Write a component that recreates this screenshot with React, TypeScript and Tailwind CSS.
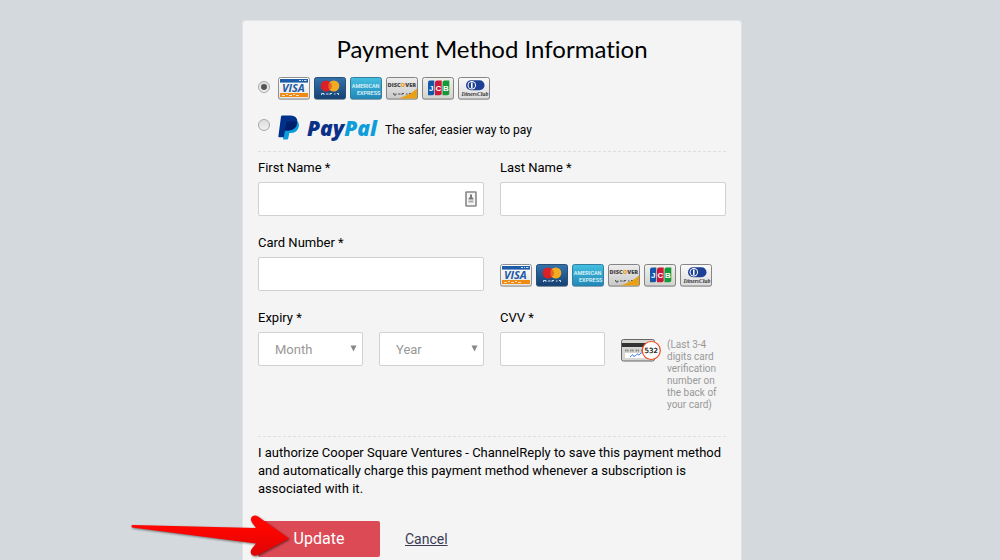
import type { ReactNode } from "react";

const fieldClass =
  "block w-full h-[34px] px-4 bg-white border border-[#d3d1cd] rounded-[2px] text-[13px] text-black outline-none focus:border-gray-400";

function CardFrame({ id, from, to, stroke, label, children }: {
  id: string;
  from: string;
  to: string;
  stroke: string;
  label: string;
  children: ReactNode;
}) {
  return (
    <svg width="32" height="23" viewBox="0 0 32 23" role="img" aria-label={label}>
      <defs>
        <linearGradient id={id} x1="0" y1="0" x2="0" y2="1">
          <stop offset="0" stopColor={from} />
          <stop offset="1" stopColor={to} />
        </linearGradient>
      </defs>
      <rect x="0" y="1" width="32" height="22" rx="2.5" fill="#000" opacity="0.15" />
      <rect x="0.5" y="0.5" width="31" height="21.5" rx="2" fill={`url(#${id})`} stroke={stroke} />
      {children}
    </svg>
  );
}

function CardLogos({ prefix }: { prefix: string }) {
  return (
    <div className="flex items-center gap-1">
      <CardFrame id={`${prefix}-visa`} from="#ffffff" to="#e4e4e4" stroke="#909090" label="Visa">
        <rect x="2" y="2" width="28" height="3.6" fill="#1d5da8" />
        <path d="M21 3.5h2M24 3.5h1M26 3.5h2.5" stroke="#c9dcf0" />
        <text x="4" y="15" fontFamily="Open Sans, sans-serif" fontSize="11" fontWeight="700" fontStyle="italic" fill="#1f5aa3">
          VISA
        </text>
        <rect x="2" y="16" width="28" height="4" fill="#f08a12" />
        <path d="M4 18.5h3M8 17.5h2M11 18.5h3M15 17.5h2M18 18.5h3" stroke="#fde3c0" />
      </CardFrame>
      <CardFrame id={`${prefix}-mc`} from="#3473ad" to="#153f70" stroke="#2b5078" label="MasterCard">
        <circle cx="12.2" cy="9" r="5.5" fill="#db2028" />
        <circle cx="19.8" cy="9" r="5.5" fill="#f2ac20" />
        <path d="M14.5 7h3M14 9h4M14.5 11h3" stroke="#db2028" />
        <path d="M7.5 18v-1.5h2.5V18M12 17h2.5M16 18v-1.5h2M20 17h1.5M23 16.5h1.5V18" fill="none" stroke="#cfdeee" />
      </CardFrame>
      <CardFrame id={`${prefix}-amex`} from="#43c0e0" to="#2187b8" stroke="#347d9c" label="American Express">
        <g fontFamily="Roboto, sans-serif" fontSize="5.5" fontWeight="500" fill="#e6f7fc">
          <text x="1.8" y="10.5">AMERICAN</text>
          <text x="7" y="17.8">EXPRESS</text>
        </g>
      </CardFrame>
      <CardFrame id={`${prefix}-disc`} from="#ededed" to="#c9c9c9" stroke="#858585" label="Discover">
        <path d="M12 21.5 Q24 18 31 11.5 V20.5 Q31 21.5 30 21.5 Z" fill="#e8a014" />
        <text x="1.5" y="10.2" fontFamily="Open Sans, sans-serif" fontSize="5.7" fontWeight="800" fill="#444">
          DISC<tspan fill="#f09a18">O</tspan>VER
        </text>
        <path d="M7 16.5h1V18h2v-1.5M12 17h2.5M16 18v-1.5h2M20 17h1.5M23 16.5h1.5" fill="none" stroke="#555" />
      </CardFrame>
      <CardFrame id={`${prefix}-jcb`} from="#f0f0ed" to="#d3d3ce" stroke="#858585" label="JCB">
        <path d="M8 3.5h4.3v12.8a2 2 0 0 1-2 2H6V5.5a2 2 0 0 1 2-2z" fill="#1457a8" />
        <path d="M15 3.5h4.7v12.8a2 2 0 0 1-2 2H13V5.5a2 2 0 0 1 2-2z" fill="#cc1836" />
        <path d="M22.5 3.5h4.8v12.8a2 2 0 0 1-2 2h-4.8V5.5a2 2 0 0 1 2-2z" fill="#159a3b" />
        <g fontFamily="Liberation Sans, sans-serif" fontSize="8" fontWeight="700" fill="#fff">
          <text x="7" y="14">J</text>
          <text x="13.5" y="14">C</text>
          <text x="21" y="14">B</text>
        </g>
      </CardFrame>
      <CardFrame id={`${prefix}-diners`} from="#fafafa" to="#dcdcde" stroke="#858585" label="Diners Club">
        <rect x="8" y="3.2" width="18.5" height="10" rx="5" fill="#1d3f94" />
        <circle cx="13.8" cy="8.2" r="4.2" fill="#fff" />
        <circle cx="13.8" cy="8.2" r="3.2" fill="#1d3f94" />
        <rect x="13" y="5.5" width="1.6" height="5.4" fill="#fff" />
        <text x="3.5" y="19.3" fontFamily="Liberation Serif, serif" fontSize="5.6" fontWeight="700" fontStyle="italic" fill="#333">
          DinersClub
        </text>
      </CardFrame>
    </div>
  );
}

function PayPalLogo() {
  return (
    <svg width="101" height="26" viewBox="0 0 101 26" overflow="visible" role="img" aria-label="PayPal">
      <path d="M7 8 L19.5 6.5 Q22 9 20.4 13 Q18.6 18 12.6 18 H11.4 L10.2 23.6 Q10 24.6 9 24.6 H5 Z" fill="#0d9ddb" />
      <path d="M3 1.5 Q3.2 0.4 4.3 0.4 H12.5 Q19.6 0.6 19.4 6.8 Q18.6 15.4 10.4 15.4 H8 Q7 15.4 6.8 16.4 L5.8 22.2 H1 Q0.2 22.2 0.4 21.2 Z" fill="#00318a" />
      <path d="M8.4 7.6 Q8.6 6.6 9.6 6.6 H15.4 Q18 6.6 19.3 7.2 Q18.2 15.4 10.4 15.4 H8 Q7.3 15.4 7 15.9 Z" fill="#001f6b" />
      <text x="29" y="21" fontFamily="Open Sans, sans-serif" fontSize="21" fontWeight="800" fontStyle="italic" fill="#0a3088">
        Pay<tspan fill="#0d9ddb">Pal</tspan>
      </text>
    </svg>
  );
}

function CvvIcon() {
  return (
    <svg width="40" height="23" viewBox="0 0 40 23" className="shrink-0" aria-hidden="true">
      <rect x="0.5" y="0.5" width="33" height="21.5" rx="2" fill="#d6d6d2" stroke="#666" />
      <rect x="1" y="4" width="32" height="4" fill="#333" />
      <path d="M4 11.5h3.5M9 11.5h4M14.5 11.5h4M20 11.5h3" stroke="#888" strokeWidth="2" strokeDasharray="1.5 .6" />
      <rect x="4" y="14" width="20" height="5" fill="#fff" />
      <path d="M9 18c2-1 2-3 3-2s0 2 2 1 2-3 3-2 0 2 2 0 2-1 4-1" fill="none" stroke="#3f7cf0" />
      <circle cx="30.3" cy="11.5" r="9" fill="#fff" stroke="#f04a1c" strokeWidth="1.2" />
      <text x="23.5" y="14" fontFamily="DejaVu Sans, sans-serif" fontSize="7" fill="#000" stroke="#000" strokeWidth="0.2">
        532
      </text>
    </svg>
  );
}

function PaymentRadio({ id, checked }: { id: string; checked?: boolean }) {
  return (
    <span className="grid shrink-0">
      <input
        type="radio"
        name="method"
        id={id}
        defaultChecked={checked}
        className="peer appearance-none col-start-1 row-start-1 w-3 h-3 rounded-full border border-[#a8a8a8] bg-linear-to-b from-[#dedede] to-[#efefef]"
      />
      <span className="hidden peer-checked:block col-start-1 row-start-1 place-self-center size-1.5 rounded-full bg-[#555] pointer-events-none" />
    </span>
  );
}

function Field({ id, label, children }: { id: string; label: string; children: ReactNode }) {
  return (
    <div>
      <label htmlFor={id} className="block mb-1 leading-5">{label}</label>
      {children}
    </div>
  );
}

function Dropdown({ id, placeholder, options, label }: {
  id: string;
  placeholder: string;
  options: string[];
  label?: string;
}) {
  return (
    <div className="relative">
      <select id={id} aria-label={label} className={`${fieldClass} appearance-none pt-0.5 !text-[#999]`}>
        <option>{placeholder}</option>
        {options.map((option) => (
          <option key={option}>{option}</option>
        ))}
      </select>
      <svg
        width="7"
        height="7"
        viewBox="0 0 7 7"
        className="absolute right-1.5 top-[13px] pointer-events-none"
        aria-hidden="true"
      >
        <path d="M0.5 0.5h6L3.5 6.5z" fill="#888" />
      </svg>
    </div>
  );
}

function PointerArrow() {
  return (
    <svg
      width="162"
      height="45"
      viewBox="0 0 162 45"
      className="absolute -left-[127px] -top-1.5 pointer-events-none drop-shadow-[1px_1px_1px_rgba(0,0,0,0.5)]"
      aria-hidden="true"
    >
      <defs>
        <linearGradient id="arrow-fill" x1="0" y1="0" x2="0" y2="1">
          <stop offset="0.3" stopColor="#ff0500" />
          <stop offset="1" stopColor="#dc0505" />
        </linearGradient>
      </defs>
      <path
        d="M1 10 L125 13 L121 7.5 Q118.5 3.5 121.5 1.3 Q124 -0.3 127 1.5 L158 23.5 L128 39.5 Q123 42 120.5 39.5 Q118.5 36.5 121 33.5 L125 28.5 L1 12.5 Q0 11 1 10 Z"
        fill="url(#arrow-fill)"
      />
    </svg>
  );
}

const months = ["01", "02", "03", "04", "05", "06", "07", "08", "09", "10", "11", "12"];
const years = ["2018", "2019", "2020", "2021", "2022", "2023"];

export default function App() {
  return (
    <main className="min-h-screen flex flex-col pt-5 pr-4 bg-[#d4d9dd] font-['Roboto',sans-serif] text-[13px] text-black">
      <form
        onSubmit={(e) => e.preventDefault()}
        className="flex-1 w-full max-w-[500px] mx-auto px-[15px] pt-3 pb-[3px] bg-[#f4f4f4] border border-b-0 border-[#e2e4e6] rounded-t-[4px]"
      >
        <h1 className="text-center text-2xl font-['Lato',sans-serif] [font-variant-ligatures:none]">
          Payment Method Information
        </h1>

        <div className="flex items-start gap-2 mt-3">
          <div className="flex pt-1">
            <PaymentRadio id="method-card" checked />
          </div>
          <label htmlFor="method-card"><CardLogos prefix="method" /></label>
        </div>
        <div className="flex items-start gap-2 mt-[15px] pb-2.5 border-b border-dashed border-[#dedede]">
          <div className="flex pt-1">
            <PaymentRadio id="method-paypal" />
          </div>
          <label htmlFor="method-paypal" className="flex items-end gap-1.5">
            <PayPalLogo />
            <span className="text-xs leading-[22px]">The safer, easier way to pay</span>
          </label>
        </div>

        <div className="grid grid-cols-2 gap-x-4 gap-y-[17px] mt-1.5">
          <Field id="first-name" label="First Name *">
            <div className="relative">
              <input id="first-name" type="text" className={fieldClass} />
              <svg
                width="12"
                height="16"
                viewBox="0 0 12 16"
                className="absolute right-[7px] top-[9px] pointer-events-none"
                aria-hidden="true"
              >
                <rect x="1" y="1" width="10" height="14" rx="0.5" fill="#f5f5f5" stroke="#888" strokeWidth="1.6" />
                <path d="M5 3.5h2v2.5l1.5 1.5v1h-5v-1L5 6z" fill="#777" />
                <path d="M3.5 10.5h5" stroke="#aaa" strokeWidth="2" />
              </svg>
            </div>
          </Field>
          <Field id="last-name" label="Last Name *">
            <input id="last-name" type="text" className={fieldClass} />
          </Field>

          <Field id="card-number" label="Card Number *">
            <input id="card-number" type="text" className={fieldClass} />
          </Field>
          <div className="flex items-end pb-1">
            <CardLogos prefix="number" />
          </div>

          <Field id="month" label="Expiry *">
            <div className="grid grid-cols-2 gap-4">
              <Dropdown id="month" placeholder="Month" options={months} />
              <Dropdown id="year" label="Expiry year" placeholder="Year" options={years} />
            </div>
          </Field>
          <Field id="cvv" label="CVV *">
            <div className="grid grid-cols-2 gap-4">
              <input id="cvv" type="text" className={fieldClass} />
              <div className="flex items-start gap-1.5 pt-[7px] text-[10px] leading-3 text-[#999]">
                <CvvIcon />
                <p>(Last 3-4 digits card verification number on the back of your card)</p>
              </div>
            </div>
          </Field>
        </div>

        <p className="mt-[25px] pt-[7px] border-t border-dashed border-[#dedede] leading-[18px]">
          I authorize Cooper Square Ventures - ChannelReply to save this payment method and automatically charge
          this payment method whenever a subscription is associated with it.
        </p>

        <div className="relative flex items-center gap-[25px] mt-[23px]">
          <button
            type="submit"
            className="w-[122px] h-9 rounded-[2px] bg-[#dc4a56] hover:bg-[#c93f4b] text-base text-white"
          >
            Update
          </button>
          <a href="#cancel" className="text-sm text-[#3b3b54] underline">Cancel</a>
          <PointerArrow />
        </div>
      </form>
    </main>
  );
}
